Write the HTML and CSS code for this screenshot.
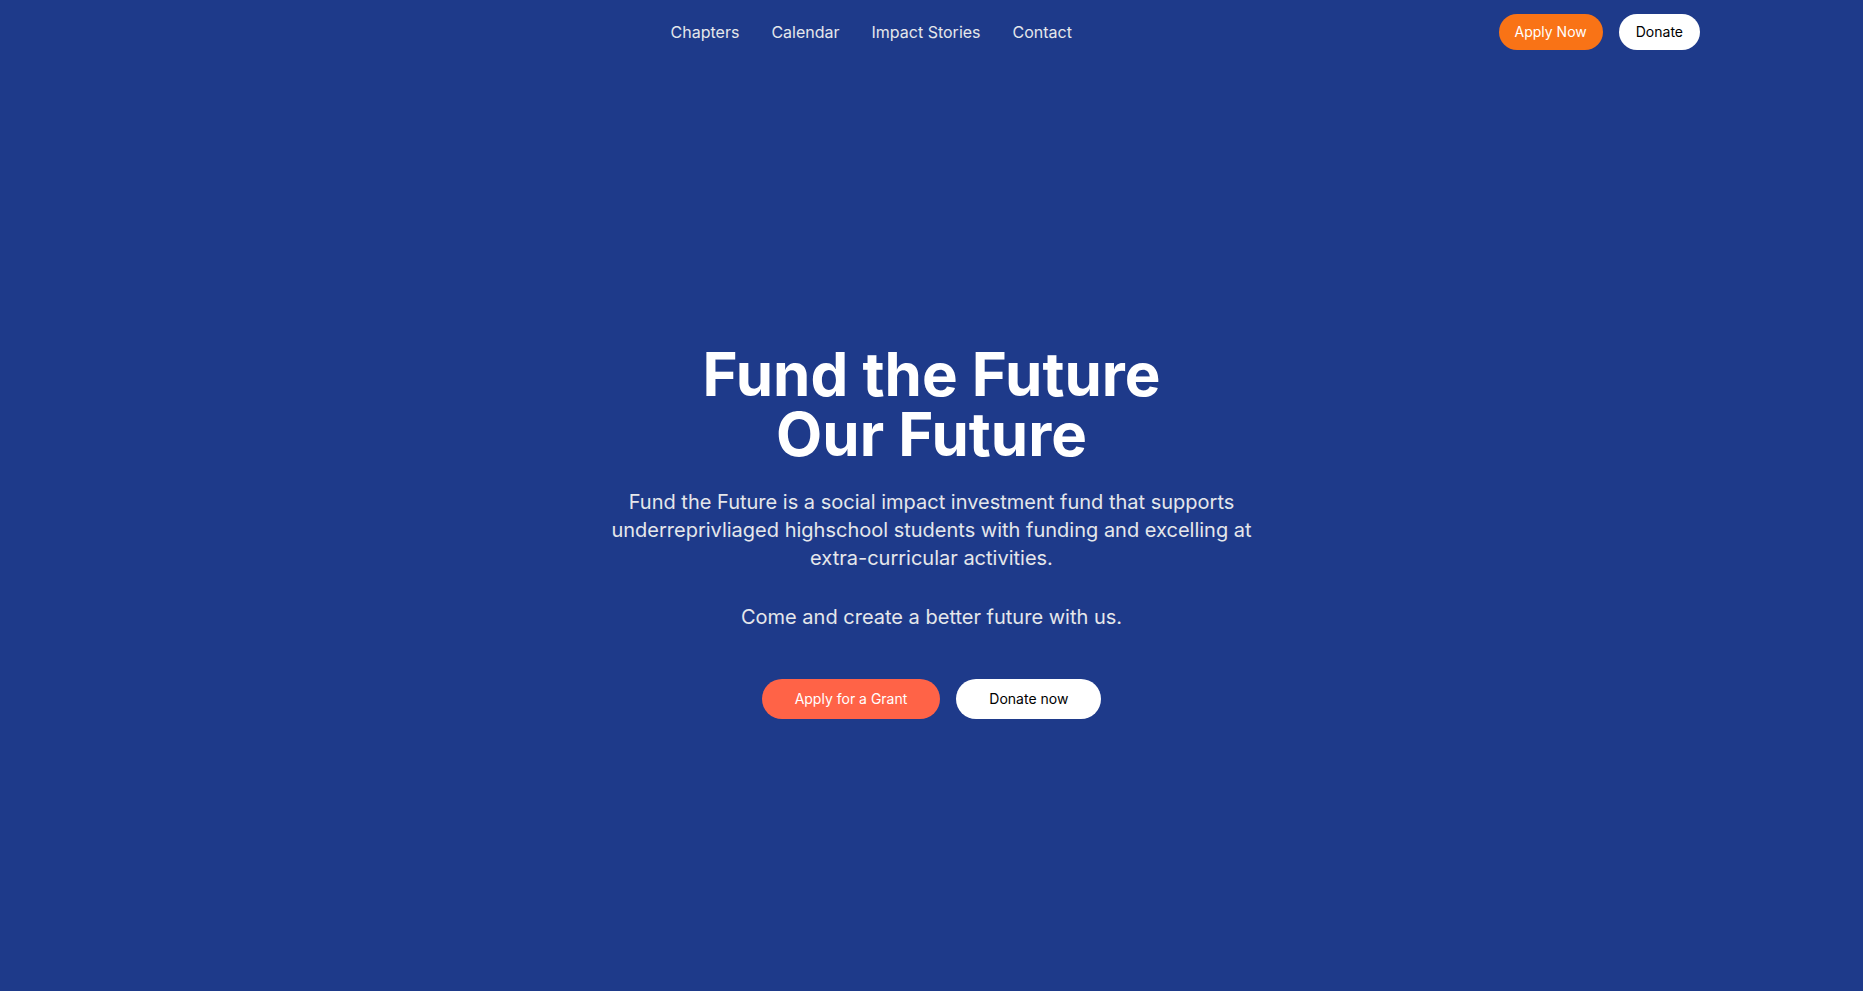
FILE: index.html
```html
<!DOCTYPE html>
<html lang="en">
<head>
<meta charset="utf-8">
<title>Fund the Future</title>
<link rel="stylesheet" href="styles.css">
</head>
<body>
<div class="page">
  <header class="header">
    <div class="logo-spacer"></div>
    <nav class="nav">
      <a href="#" class="nav-link">Chapters</a>
      <a href="#" class="nav-link">Calendar</a>
      <a href="#" class="nav-link">Impact Stories</a>
      <a href="#" class="nav-link">Contact</a>
    </nav>
    <div class="header-actions">
      <a href="#" class="btn btn-orange">Apply Now</a>
      <a href="#" class="btn btn-white btn-donate">Donate</a>
    </div>
  </header>
  <main class="hero">
    <div class="hero-inner">
      <h1 class="hero-title">Fund the Future<br>Our Future</h1>
      <p class="hero-text">Fund the Future is a social impact investment fund that supports underreprivliaged highschool students with funding and excelling at extra-curricular activities.</p>
      <p class="hero-text hero-text-second">Come and create a better future with us.</p>
      <div class="hero-actions">
        <a href="#" class="btn btn-lg btn-tomato">Apply for a Grant</a>
        <a href="#" class="btn btn-lg btn-white">Donate now</a>
      </div>
    </div>
  </main>
</div>
</body>
</html>
```

FILE: styles.css
```css
* { box-sizing: border-box; }
html, body { margin: 0; padding: 0; }
body {
  background: #1e3a8a;
  font-family: Inter, "Noto Sans", "Liberation Sans", sans-serif;
  color: #ffffff;
}
a { text-decoration: none; }

.page {
  min-height: 100vh;
  display: flex;
  flex-direction: column;
}

.header {
  display: flex;
  align-items: center;
  justify-content: space-between;
  padding: 14px 163px;
}
.logo-spacer { width: 81px; height: 36px; }
.nav {
  display: flex;
  gap: 32px;
}
.nav-link {
  color: #e5e7eb;
  font-size: 16px;
  line-height: 24px;
}
.header-actions {
  display: flex;
  gap: 16px;
}

.btn {
  display: inline-block;
  border-radius: 9999px;
  font-size: 14px;
  line-height: 20px;
  padding: 8px 16px;
  font-weight: 400;
}
.btn-donate { padding: 8px 17px; }
.btn-lg { padding: 10px 33px; }
.btn-orange { background: #f97316; color: #ffffff; }
.btn-white { background: #ffffff; color: #000000; }
.btn-tomato { background: #ff6347; color: #ffffff; }

.hero {
  flex: 1;
  display: flex;
  align-items: center;
  justify-content: center;
  padding-top: 8px;
}
.hero-inner {
  display: flex;
  flex-direction: column;
  align-items: center;
  text-align: center;
}
.hero-title {
  margin: 0 0 24px;
  font-size: 60px;
  line-height: 60px;
  font-weight: 700;
}
.hero-text {
  margin: 0;
  max-width: 672px;
  font-size: 20px;
  line-height: 28px;
  color: #e5e7eb;
}
.hero-text-second { margin-top: 31px; }
.hero-actions {
  display: flex;
  gap: 16px;
  margin-top: 48px;
}
```
